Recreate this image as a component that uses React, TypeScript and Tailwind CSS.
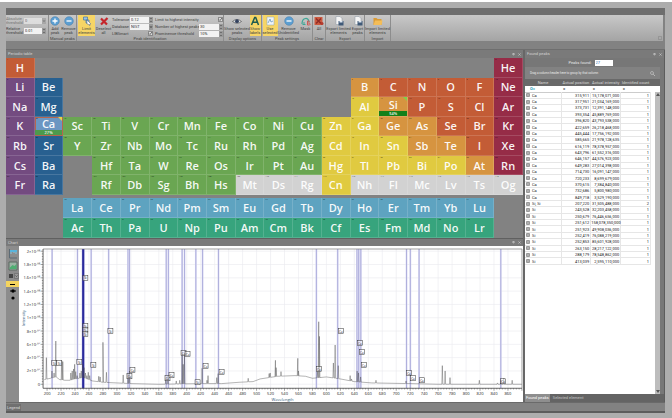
import { Fragment, ReactNode } from "react";
import { clsx } from "clsx";

//Elements
const SYMBOLS = (
    "H He Li Be B C N O F Ne Na Mg Al Si P S Cl Ar K Ca Sc Ti V Cr Mn Fe Co Ni Cu Zn Ga Ge As Se Br Kr " +
    "Rb Sr Y Zr Nb Mo Tc Ru Rh Pd Ag Cd In Sn Sb Te I Xe Cs Ba La Ce Pr Nd Pm Sm Eu Gd Tb Dy Ho Er Tm Yb Lu " +
    "Hf Ta W Re Os Ir Pt Au Hg Tl Pb Bi Po At Rn Fr Ra Ac Th Pa U Np Pu Am Cm Bk Cf Es Fm Md No Lr " +
    "Rf Db Sg Bh Hs Mt Ds Rg Cn Nh Fl Mc Lv Ts Og"
).split(" ");

const MAIN_ROWS = [
    "H . . . . . . . . . . . . . . . . He",
    "Li Be . . . . . . . . . . B C N O F Ne",
    "Na Mg . . . . . . . . . . Al Si P S Cl Ar",
    "K Ca Sc Ti V Cr Mn Fe Co Ni Cu Zn Ga Ge As Se Br Kr",
    "Rb Sr Y Zr Nb Mo Tc Ru Rh Pd Ag Cd In Sn Sb Te I Xe",
    "Cs Ba . Hf Ta W Re Os Ir Pt Au Hg Tl Pb Bi Po At Rn",
    "Fr Ra . Rf Db Sg Bh Hs Mt Ds Rg Cn Nh Fl Mc Lv Ts Og",
];

const SERIES_ROWS = [
    ". . La Ce Pr Nd Pm Sm Eu Gd Tb Dy Ho Er Tm Yb Lu .",
    ". . Ac Th Pa U Np Pu Am Cm Bk Cf Es Fm Md No Lr .",
];

const GROUPS: [string, string][] = [
    ["H C N O F P S Cl Se Br I", "bg-[#c35c36]"],
    ["Li Na K Rb Cs Fr", "bg-[#734b80]"],
    ["Be Mg Ca Sr Ba Ra", "bg-[#286090]"],
    ["Zn Cd Hg Cn Al Ga In Sn Tl Pb Bi Po", "bg-[#e0ca40]"],
    ["B Si Ge As Sb Te At", "bg-[#d69440]"],
    ["He Ne Ar Kr Xe Rn", "bg-[#962c47]"],
    ["Mt Ds Rg Nh Fl Mc Lv Ts Og", "bg-[#d2d2d2]"],
    ["La Ce Pr Nd Pm Sm Eu Gd Tb Dy Ho Er Tm Yb Lu", "bg-[#5ea3c0]"],
    ["Ac Th Pa U Np Pu Am Cm Bk Cf Es Fm Md No Lr", "bg-[#37a47d]"],
];

//Peaks
const PEAKS: [string, string, string, number][] = [
    ["Ca", "315,911", "15,178,071,000", 1],
    ["Ca", "317,951", "21,034,169,000", 1],
    ["Ca", "373,731", "12,391,148,000", 1],
    ["Ca", "393,354", "45,889,769,000", 1],
    ["Ca", "396,820", "43,793,538,000", 1],
    ["Ca", "422,659", "26,218,468,000", 1],
    ["Ca", "445,444", "17,756,192,000", 1],
    ["Ca", "585,665", "21,978,128,635", 1],
    ["Ca", "616,119", "78,378,957,000", 1],
    ["Ca", "643,796", "61,552,316,000", 1],
    ["Ca", "646,157", "44,576,923,000", 1],
    ["Ca", "649,283", "27,014,398,000", 1],
    ["Ca", "714,730", "16,091,147,000", 1],
    ["Ca", "720,233", "8,699,679,000", 1],
    ["Ca", "370,615", "7,384,840,000", 1],
    ["Ca", "732,686", "5,800,980,000", 1],
    ["Ca", "849,718", "3,529,190,000", 1],
    ["Si, Si", "207,220", "31,505,488,000", 2],
    ["Si", "243,528", "32,203,458,000", 1],
    ["Si", "250,679", "76,446,656,000", 1],
    ["Si", "251,612", "158,078,350,000", 1],
    ["Si", "251,923", "49,908,036,000", 1],
    ["Si", "252,419", "76,088,219,000", 1],
    ["Si", "252,853", "85,601,928,000", 1],
    ["Si", "263,150", "28,217,122,000", 1],
    ["Si", "288,179", "78,548,862,000", 1],
    ["Si", "413,039", "2,595,110,000", 1],
];

//Spectrum: baseline and spikes as [wavelength, intensity / 1e8]
const BASELINE = [
    [196, 0.07], [205, 0.09], [213, 0.11], [218, 0.07], [225, 0.06], [233, 0.06], [240, 0.08], [252, 0.1],
    [265, 0.05], [280, 0.03], [300, 0.02], [320, 0.01], [360, 0], [420, 0.01], [450, 0.01], [475, 0.03],
    [495, 0.04], [505, 0.08], [530, 0.12], [555, 0.13], [570, 0.12], [580, 0.09], [600, 0.11], [620, 0.08],
    [640, 0.04], [665, 0.02], [720, 0.01], [760, 0], [880, 0],
];

const SPIKES = [
    [199, 0.4], [207, 0.2], [210, 0.17], [212.5, 0.65], [221, 0.35], [222.5, 0.34], [234, 0.17], [236, 0.2],
    [238, 0.23], [239.5, 0.3], [241, 0.19], [243, 0.13], [247, 0.17], [249, 0.2], [251, 0.3], [253, 0.25],
    [255, 0.17], [257, 0.13], [259, 0.18], [261, 0.13], [274, 0.12], [276, 0.11], [280, 0.63], [285, 0.18],
    [309, 0.14], [316, 0.16], [318, 0.2], [370, 0.08], [373, 0.13], [385, 0.05], [390, 0.06], [393.4, 0.46],
    [395, 0.3], [396.8, 0.44], [422, 0.24], [429, 0.06], [430.5, 0.13], [443, 0.1], [445, 0.16], [488, 0.09],
    [518, 0.16], [519.5, 0.17], [527, 0.36], [528, 0.25], [535, 0.19], [559, 0.39], [560, 0.2], [587, 0.2],
    [589, 0.94], [590, 0.72], [610, 0.32], [612.5, 0.59], [617, 0.28], [634, 0.13], [636, 0.08], [644, 0.2],
    [646, 0.17], [649, 0.11], [671, 0.06], [714, 0.05], [766, 0.28], [770, 0.2], [777, 0.1], [819, 0.06],
    [845, 0.02], [850, 0.06], [854, 0.09], [866, 0.06],
];

const TAGS = [
    [35, 117], [40, 117], [60, 116], [66, 32], [66, 80], [66, 84], [66, 88], [74, 119], [91, 85], [110, 130],
    [113, 124], [148, 132], [152, 129], [164, 107], [168, 108], [178, 136], [186, 120], [202, 126], [299, 123],
    [321, 85], [340, 97], [342, 106], [344, 119], [389, 127], [393, 132], [402, 134], [483, 135],
];

const Y_LABELS = ["2×10⁺⁰⁸", "1.8×10⁺⁰⁸", "1.6×10⁺⁰⁸", "1.4×10⁺⁰⁸", "1.2×10⁺⁰⁸", "1×10⁺⁰⁸", "8×10⁺⁰⁷", "6×10⁺⁰⁷", "4×10⁺⁰⁷", "2×10⁺⁰⁷", "0"];

const toX = (w: number) => 28 + (w - 200) * 0.697;
const toY = (v: number) => 138 - v * 66.4;

const baseAt = (w: number) => {
    const i = Math.max(1, BASELINE.findIndex(([bw]) => bw >= w));
    const [w0, v0] = BASELINE[i - 1];
    const [w1, v1] = BASELINE[i];
    return v0 + ((v1 - v0) * (w - w0)) / (w1 - w0);
};

const tracePoints = [
    ...BASELINE,
    ...SPIKES.flatMap(([w, v]) => [[w - 0.7, baseAt(w - 0.7)], [w, v], [w + 0.7, baseAt(w + 0.7)]]),
]
    .sort((a, b) => a[0] - b[0])
    .map(([w, v]) => `${toX(w)},${toY(v)}`)
    .join(" ");

const range = (from: number, to: number, step: number) =>
    Array.from({ length: Math.floor((to - from) / step) + 1 }, (_, i) => from + i * step);

//Periodic table
const ElementCell = ({ symbol }: { symbol: string }) => {
    if (symbol === ".") return <div />;
    const color = GROUPS.find(([list]) => list.split(" ").includes(symbol))?.[1] ?? "bg-[#6aa652]";
    const isCa = symbol === "Ca";
    const isSi = symbol === "Si";

    return (
        <button
            className={clsx(
                "relative flex min-h-0 items-center justify-center border-r border-b border-white/15 text-[11px] leading-none font-semibold text-white/95",
                isCa ? "bg-[#6b96c2] outline outline-[#b5654f] -outline-offset-1" : color,
                (isCa || isSi) && "pb-1"
            )}
        >
            <span className="absolute top-0 left-px text-[2px] leading-[3px] font-normal text-black/80">
                {SYMBOLS.indexOf(symbol) + 1}
            </span>
            {symbol}
            {(isCa || isSi) && (
                <Fragment>
                    <svg viewBox="0 0 4 4" className={clsx("absolute top-0 right-0 size-1", isCa ? "fill-[#e6d54a]" : "fill-[#7bd24c]")}>
                        <path d="M0 0h4v4z" />
                    </svg>
                    <span className={clsx("absolute inset-x-0 bottom-0 text-[4px] leading-[5px]", isCa ? "bg-[#4c9a4c]" : "bg-[#12801a]")}>
                        {isCa ? "27%" : "54%"}
                    </span>
                </Fragment>
            )}
        </button>
    );
};

const PeriodicTable = () => (
    <div>
        <div className="grid h-[137px] grid-cols-18 grid-rows-7">
            {MAIN_ROWS.flatMap((row) => row.split(" ")).map((s, i) => <ElementCell key={i} symbol={s} />)}
        </div>
        <div className="mt-[3px] grid h-10 grid-cols-18 grid-rows-2">
            {SERIES_ROWS.flatMap((row) => row.split(" ")).map((s, i) => <ElementCell key={i} symbol={s} />)}
        </div>
    </div>
);

//Chart
const Chart = () => (
    <svg viewBox="0 0 503 156" className="block min-w-0 flex-1 bg-white" fontFamily="'Open Sans', sans-serif">
        {range(200, 860, 20).map((w) => (
            <line key={w} x1={toX(w)} x2={toX(w)} y1="3" y2="142" stroke="#e9e9ee" strokeWidth="0.6" />
        ))}
        {range(0, 10, 1).map((n) => (
            <line key={n} x1="24" x2="502" y1={toY(n / 5)} y2={toY(n / 5)} stroke="#e9e9ee" strokeWidth="0.6" />
        ))}
        <rect x={toX(642.5)} y="3" width="5" height="139" fill="#dedef4" />
        {PEAKS.map(([, position]) => {
            const x = toX(parseFloat(position.replace(",", ".")));
            return (
                <Fragment key={position}>
                    <line x1={x} x2={x} y1="3" y2="142" stroke="#dcdcf4" strokeWidth="1.8" />
                    <line x1={x} x2={x} y1="3" y2="142" stroke="#9292cc" strokeWidth="0.6" />
                </Fragment>
            );
        })}
        <rect x="63" y="3" width="2" height="139" fill="#2a2a9c" />
        <polyline points={tracePoints} fill="none" stroke="#444" strokeWidth="0.4" />
        {TAGS.map(([x, y], i) => (
            <g key={i}>
                <rect x={x - 2.3} y={y - 2.5} width="5" height="5" fill="#fff" fillOpacity="0.5" stroke="#333" strokeWidth="0.5" />
                <text x={x + 0.2} y={y + 1.4} fontSize="3" textAnchor="middle" fill="#112">{x < 100 || x === 178 ? "Si" : "Ca"}</text>
            </g>
        ))}
        <path d="M24 3H502V142" fill="none" stroke="#777" strokeWidth="0.7" />
        <path d="M24 3V142H502" fill="none" stroke="#444" strokeWidth="0.8" />
        {range(200, 880, 4).map((w) => (
            <line key={w} x1={toX(w)} x2={toX(w)} y1="142" y2={w % 20 === 0 ? 144.5 : 143.2} stroke="#444" strokeWidth="0.5" />
        ))}
        {range(0, 50, 1).map((n) => (
            <line key={n} x1={n % 5 === 0 ? 21.5 : 22.8} x2="24" y1={toY(n / 25)} y2={toY(n / 25)} stroke="#444" strokeWidth="0.5" />
        ))}
        {range(200, 860, 20).map((w) => (
            <text key={w} x={toX(w)} y="149" fontSize="4" textAnchor="middle" fill="#222">{w}</text>
        ))}
        {Y_LABELS.map((label, i) => (
            <text key={label} x="21" y={toY(2 - i / 5) + 1.5} fontSize="4" textAnchor="end" fill="#222">{label}</text>
        ))}
        <text x="263" y="154.5" fontSize="4" textAnchor="middle" fill="#2f5a7c">Wavelength</text>
        <text transform="translate(6 72) rotate(-90)" fontSize="4" textAnchor="middle" fill="#2f5a7c">Intensity</text>
    </svg>
);

const ChartTools = () => (
    <div className="flex w-[13px] flex-col items-center gap-px bg-[#8c8c8c] pt-[3px]">
        <button aria-label="Axes">
            <svg viewBox="0 0 10 10" className="size-[10px]">
                <path d="M1.5 0v9H9" fill="none" stroke="#5c6b75" />
                <path d="M2 1h7v2H2z" fill="#58b4dc" />
                <path d="M3 3v2M6 3v1M8 3v2" stroke="#8ac4dc" />
            </svg>
        </button>
        <button aria-label="Area" className="mt-px">
            <svg viewBox="0 0 10 10" className="size-[10px]">
                <path d="M1 1h8v8H1z" fill="#9cb3a5" stroke="#5d6a62" />
                <path d="M1.5 7l3-3 2 1 2-2v5h-7z" fill="#4fae72" />
            </svg>
        </button>
        <button aria-label="Layout">
            <svg viewBox="0 0 12 8" className="h-2 w-3">
                <path d="M2 2h4v4H2z" fill="#444" />
                <path d="M7.500 1.500h4v5h-4z" fill="#999" stroke="#666" strokeWidth="0.6" />
                <path d="M8.500 3.500l1 1 1-1" fill="none" stroke="#333" strokeWidth="0.6" />
            </svg>
        </button>
        <button aria-label="Line" className="flex h-[6px] w-full items-center justify-center bg-[#f4d45e]">
            <span className="h-px w-[5px] bg-black" />
        </button>
        <button aria-label="Line with markers">
            <svg viewBox="0 0 6 6" className="size-[6px]"><path d="M0 3h6" stroke="#000" /><circle cx="3" cy="3" r="1.700" /></svg>
        </button>
        <button aria-label="Markers">
            <svg viewBox="0 0 6 6" className="size-[6px]"><circle cx="3" cy="3" r="1.600" /></svg>
        </button>
    </div>
);

//Ribbon
const Icon = ({ children }: { children: ReactNode }) => (
    <svg viewBox="0 0 10 10" className="size-[10px]">{children}</svg>
);

const RibbonGroup = ({ caption, className = "", children }: { caption?: string; className?: string; children: ReactNode }) => (
    <section className={`flex shrink-0 flex-col border-r border-[#8d8d8d] ${className}`}>
        <div className="flex h-[21px] justify-center">{children}</div>
        <h2 className="text-center leading-[5px] text-[#454545]">{caption}</h2>
    </section>
);

interface RibbonButtonProps {
    label: string[];
    active?: boolean;
    className?: string;
    children: ReactNode;
}

const RibbonButton = ({ label, active, className = "", children }: RibbonButtonProps) => (
    <button className={clsx("flex shrink-0 flex-col items-center gap-px pt-px leading-[4px] whitespace-nowrap", active && "bg-[#f6d566]", className)}>
        <Icon>{children}</Icon>
        <span>{label.map((line) => <span key={line} className="block">{line}</span>)}</span>
    </button>
);

interface FieldProps {
    label: string;
    value?: string;
    options?: string[];
    disabled?: boolean;
    labelClass?: string;
    className?: string;
}

const Field = ({ label, value, options, disabled, labelClass = "w-[18px] whitespace-nowrap", className = "h-[7px]" }: FieldProps) => (
    <label className={clsx("flex items-center leading-[4px]", disabled && "opacity-60", className)}>
        <span className={`shrink-0 ${labelClass}`}>{label}</span>
        {value === undefined ? (
            <Fragment>
                <input type="checkbox" defaultChecked className="ml-auto size-[5px] appearance-none border border-[#8a8a8a] bg-[#ddd]" />
                <svg viewBox="0 0 5 5" className="-ml-[5px] size-[5px]"><path d="M1 2.500l1 1 2-2.500" fill="none" stroke="#333" strokeWidth="0.7" /></svg>
            </Fragment>
        ) : (
            <Fragment>
                {options ? (
                    <select defaultValue={value} disabled={disabled} className="h-[6px] w-0 min-w-0 flex-1 appearance-none bg-[#f2f2f2] pl-px text-[#333]">
                        {options.map((option) => <option key={option}>{option}</option>)}
                    </select>
                ) : (
                    <input defaultValue={value} disabled={disabled} className="h-[6px] w-0 min-w-0 flex-1 bg-[#f2f2f2] pl-px text-[#333]" />
                )}
                <svg viewBox="0 0 4 6" className="h-[6px] w-1 bg-[#999]">
                    <path d={options ? "M.5 2.500l1.500 1.500 1.500-1.500z" : "M1 2l1-1 1 1zM1 4l1 1 1-1z"} fill="#444" />
                </svg>
            </Fragment>
        )}
    </label>
);

const Ribbon = () => (
    <div className="mr-[2px] flex overflow-hidden bg-linear-to-b from-[#c8c8c8] to-[#a4a4a4] text-[#3f3f3f]">
        <RibbonGroup className="w-[43px]">
            <div className="flex w-full flex-col gap-px pt-px pr-[2px]">
                <Field label="Absolute threshold" value="0" options={["0"]} disabled className="h-[9px]" labelClass="w-[18px]" />
                <Field label="Relative threshold" value="0.01" className="h-[9px]" labelClass="w-[18px]" />
            </div>
        </RibbonGroup>
        <RibbonGroup caption="Manual peaks" className="w-[28px]">
            <RibbonButton label={["Add", "peak"]} className="w-[12px]">
                <circle cx="5" cy="5" r="4.300" fill="#5c9fd2" stroke="#3f79ab" strokeWidth="0.5" />
                <path d="M5 2.500v5M2.500 5h5" stroke="#fff" strokeWidth="1.300" />
            </RibbonButton>
            <RibbonButton label={["Remove", "peak"]} className="w-[15px]">
                <circle cx="5" cy="5" r="4.300" fill="#5c9fd2" stroke="#3f79ab" strokeWidth="0.5" />
                <path d="M2.500 5h5" stroke="#fff" strokeWidth="1.300" />
            </RibbonButton>
        </RibbonGroup>
        <RibbonGroup caption="Peak identification" className="w-[147px]">
            <RibbonButton active label={["Limit", "elements"]} className="ml-px w-[17px]">
                <path d="M1.500 1h4v3h-4zM4 4h3v3H4z" fill="#9cc3e4" stroke="#4477a6" strokeWidth="0.7" />
                <path d="M5 4l4 4-1.500.2.500 1.300-1-.3-.5-1L5 8z" fill="#fff" stroke="#567" strokeWidth="0.5" />
            </RibbonButton>
            <RibbonButton label={["Deselect", "all"]} className="w-[17px]">
                <path d="M2 2.500l6 6M8.500 2L2 8.500" stroke="#c5262c" strokeWidth="2.200" />
            </RibbonButton>
            <div className="w-[42px] pt-px pr-px">
                <Field label="Tolerance" value="0.12" />
                <Field label="Database" value="NIST" options={["NIST"]} />
                <Field label="LIBSmart" />
            </div>
            <div className="flex-1 pt-px pl-px">
                <Field label="Limit to highest intensity" labelClass="w-[44px] whitespace-nowrap" />
                <Field label="Number of highest peaks" value="30" labelClass="w-[44px] whitespace-nowrap" />
                <Field label="Prominence threshold" value="10%" labelClass="w-[44px] whitespace-nowrap" />
            </div>
        </RibbonGroup>
        <RibbonGroup caption="Display options" className="w-[38px]">
            <RibbonButton label={["Show selected", "peaks"]} className="w-[25px]">
                <path d="M.5 5.500Q5 1.500 9.500 5.500 5 9 .5 5.500z" fill="#dfe3e8" stroke="#555" strokeWidth="0.7" />
                <circle cx="5" cy="5.200" r="1.900" fill="#33415e" />
            </RibbonButton>
            <RibbonButton active label={["Show", "labels"]} className="w-[11px]">
                <path d="M1.500 9L4.700 1.500h1L8.500 9M3 6.200h4" fill="none" stroke="#1f5b50" strokeWidth="1.500" />
            </RibbonButton>
        </RibbonGroup>
        <RibbonGroup caption="Peak settings" className="w-[51px]">
            <RibbonButton active label={["Use", "selected"]} className="w-[15px]">
                <path d="M2 1h7v8H2z" fill="#eef3f7" stroke="#8aa0b3" strokeWidth="0.5" />
                <path d="M3 7l2-4 1 3 2-1" fill="none" stroke="#6b9ac4" strokeWidth="0.8" />
            </RibbonButton>
            <RibbonButton label={["Remove", "Unidentified"]} className="w-[22px]">
                <circle cx="5" cy="5" r="4.300" fill="#5c9fd2" stroke="#3f79ab" strokeWidth="0.5" />
                <path d="M2.500 5h5" stroke="#fff" strokeWidth="1.300" />
            </RibbonButton>
            <RibbonButton label={["Mask"]} className="w-[12px]">
                <path d="M1 8c0-7 7-7 7-2" fill="none" stroke="#3da695" strokeWidth="1.200" />
                <path d="M3 6v3M1.500 8.500h3" stroke="#3da695" />
                <path d="M6.500 5v4h2c1.500-1 0-2-1-2 1-.5 1-2 0-2z" fill="none" stroke="#d0504c" strokeWidth="0.9" />
            </RibbonButton>
        </RibbonGroup>
        <RibbonGroup caption="Clear" className="w-[13px]">
            <RibbonButton label={["All"]} className="w-[11px]">
                <path d="M.5 1h8v8h-8z" fill="#cc5a40" />
                <path d="M2 2.500l5 5M7 2.500l-5 5" stroke="#8e2b24" strokeWidth="1.400" />
                <circle cx="8" cy="7.500" r="1.500" fill="#b33b2f" />
            </RibbonButton>
        </RibbonGroup>
        <RibbonGroup caption="Export" className="w-[39px]">
            <RibbonButton label={["Export limited", "elements"]} className="w-[25px]">
                <path d="M2 .5h4l2 2v6H2z" fill="#f5f5f5" stroke="#8995a0" strokeWidth="0.5" />
                <path d="M4.500 5h5v4.500h-5z" fill="#405a78" /><path d="M5.500 5h3v1.500h-3z" fill="#dde5ee" />
            </RibbonButton>
            <RibbonButton label={["Export", "peaks"]} className="w-[13px]">
                <path d="M2 .5h4l2 2v6H2z" fill="#f5f5f5" stroke="#8995a0" strokeWidth="0.5" />
                <path d="M4.500 5h5v4.500h-5z" fill="#405a78" /><path d="M5.500 5h3v1.500h-3z" fill="#dde5ee" />
            </RibbonButton>
        </RibbonGroup>
        <RibbonGroup caption="Import" className="w-[26px]">
            <RibbonButton label={["Import limited", "elements"]}>
                <path d="M.5 2h3l1 1h4v6h-8z" fill="#d99a35" />
                <path d="M2 4.500h7.500l-1 4.500h-8z" fill="#f4bd58" />
            </RibbonButton>
        </RibbonGroup>
        <button aria-label="Collapse ribbon" className="mt-auto mr-px mb-px ml-auto">
            <svg viewBox="0 0 4 4" className="size-1"><path d="M.5.5h3v3h-3z" fill="none" stroke="#888" strokeWidth="0.6" /></svg>
        </button>
    </div>
);

//Panels
const PanelHeader = ({ title, className = "h-2" }: { title: string; className?: string }) => (
    <div className={`flex shrink-0 items-center justify-between bg-[#7a7a7a] px-[2px] leading-[6px] text-[#d2d2d2] ${className}`}>
        <h2>{title}</h2>
        <div className="flex gap-[3px] leading-[4px]">
            <button aria-label={`Pin ${title}`}>
                <svg viewBox="0 0 4 4" className="size-[3px]"><path d="M1 0h2v2H1zM0 2h4M2 2v2" stroke="#bbb" strokeWidth="0.5" fill="#bbb" /></svg>
            </button>
            <button aria-label={`Close ${title}`}>
                <svg viewBox="0 0 4 4" className="size-[3px]"><path d="M.5.5l3 3M3.500.5l-3 3" stroke="#ccc" strokeWidth="0.8" /></svg>
            </button>
        </div>
    </div>
);

const FoundPeaks = () => (
    <aside className="flex w-[141px] shrink-0 flex-col border-l-2 border-[#676767] bg-[#777]">
        <PanelHeader title="Found peaks" />
        <label className="flex h-[9px] items-center justify-center gap-[3px] pr-2 text-[#e6e6e6]">
            Peaks found:
            <input defaultValue="27" className="h-[6px] w-[18px] bg-white pl-px text-[#3272b4]" />
        </label>
        <div className="mr-1 flex h-[12px] items-center justify-between bg-[#828282] px-[5px] text-[3px] text-[#e8e8e8]">
            Drag a column header here to group by that column
            <svg viewBox="0 0 5 5" className="size-[5px]"><circle cx="2" cy="2" r="1.500" fill="none" stroke="#ddd" strokeWidth="0.5" /><path d="M3.200 3.200L5 5" stroke="#ddd" strokeWidth="0.6" /></svg>
        </div>
        <div className="mr-1 flex flex-1 bg-white">
            <div className="flex-1">
                <table className="h-[186px] w-full table-fixed border-collapse text-right leading-[5px] text-[#222]">
                    <thead>
                        <tr className="h-[7px] bg-[#696969] text-center text-[#d8d8d8]">
                            <th className="w-[36px] font-normal">Name</th>
                            <th className="font-normal">Actual position</th>
                            <th className="font-normal">Actual intensity</th>
                            <th className="font-normal whitespace-nowrap">Identified count</th>
                        </tr>
                        <tr className="h-[6px] border-b border-[#ccc] text-left">
                            <td className="pl-[5px] font-bold text-[#29a3bd]">O=</td>
                            <td className="pl-[2px] font-bold">=</td>
                            <td className="pl-[2px] font-bold">=</td>
                            <td className="pl-[2px] font-bold">=</td>
                        </tr>
                    </thead>
                    <tbody>
                        {PEAKS.map(([name, position, intensity, count]) => (
                            <tr key={position} className="border-b border-[#e6e6e6]">
                                <td className="border-r border-[#e6e6e6] text-left">
                                    <span className="flex items-center gap-[2px] pl-px">
                                        <svg viewBox="0 0 4 4" className="size-1"><path d="M.5.5h3v3h-3zM2 .5v3M.5 2h3" fill="none" stroke="#666" strokeWidth="0.6" /></svg>
                                        {name}
                                    </span>
                                </td>
                                <td className="border-r border-[#e6e6e6] pr-px">{position}</td>
                                <td className="border-r border-[#e6e6e6] pr-px">{intensity}</td>
                                <td className="border-r border-[#e6e6e6] pr-px">{count}</td>
                            </tr>
                        ))}
                    </tbody>
                </table>
            </div>
            <div className="flex w-[9px] flex-col">
                <div className="h-[7px] bg-[#696969]" />
                <div className="mt-[6px] ml-1 flex flex-1 flex-col items-center justify-between bg-[#bdbdbd] py-px">
                    <svg viewBox="0 0 4 3" className="h-[3px] w-1"><path d="M0 3l2-3 2 3z" fill="#555" /></svg>
                    <svg viewBox="0 0 4 3" className="h-[3px] w-1"><path d="M0 0l2 3 2-3z" fill="#555" /></svg>
                </div>
            </div>
        </div>
        <div className="flex h-2 shrink-0 bg-[#646464] leading-[8px] text-[#c4c4c4]">
            <button className="bg-[#8e8e8e] px-px text-white">Found peaks</button>
            <button className="px-[3px]">Selected element</button>
        </div>
    </aside>
);

const App = () => (
    <div className="flex min-h-screen flex-col border-t-2 border-white bg-[#adadad] pt-[6px] pr-[7px] pb-[5px] pl-[6px] font-['Roboto','Liberation_Sans',sans-serif] text-[4px] leading-[5px]">
        <div className="flex flex-1 flex-col border-b-2 border-[#5c5c5c] bg-[#828282]">
            <div className="h-[7px] bg-[#6e6e6e]" />
            <Ribbon />
            <div className="h-[9px] border-b border-[#6e6e6e]" />
            <main className="flex flex-1 border-r border-[#5c5c5c]">
                <div className="flex min-w-0 flex-1 flex-col">
                    <section>
                        <PanelHeader title="Periodic table" />
                        <div className="font-['Open_Sans','Noto_Sans',sans-serif]">
                            <PeriodicTable />
                        </div>
                    </section>
                    <section className="flex flex-1 flex-col border-t border-[#606060]">
                        <PanelHeader title="Chart" className="h-[7px]" />
                        <div className="flex flex-1">
                            <ChartTools />
                            <Chart />
                        </div>
                    </section>
                </div>
                <FoundPeaks />
            </main>
            <footer className="flex h-[9px] items-center border-t border-[#6a6a6a]">
                <button className="bg-[#707070] px-px leading-[7px] text-[#ddd]">Legend</button>
            </footer>
        </div>
    </div>
);

export default App;
